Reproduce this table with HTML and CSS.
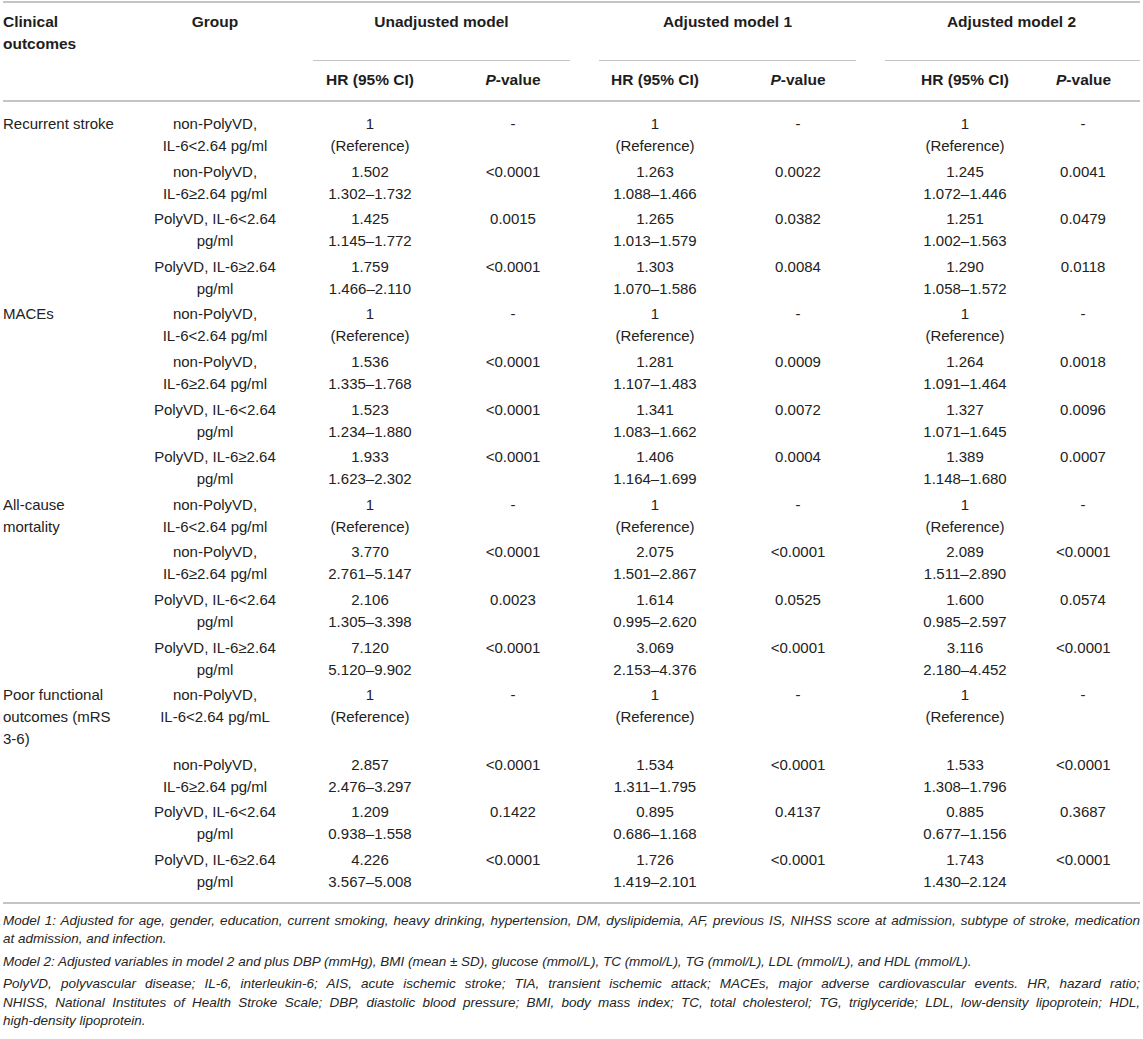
FILE: index.html
```html
<!DOCTYPE html>
<html lang="en">
<head>
<meta charset="utf-8">
<title>Table</title>
<link rel="stylesheet" href="styles.css">
</head>
<body>
<div class="wrap">
<table class="tbl">
  <colgroup>
    <col class="c1"><col class="c2"><col class="c3"><col class="c4"><col class="c5"><col class="c6"><col class="c7"><col class="c8">
  </colgroup>
  <thead>
    <tr class="h1">
      <th class="left">Clinical<br>outcomes</th>
      <th>Group</th>
      <th colspan="2" class="grp">Unadjusted model</th>
      <th colspan="2" class="grp">Adjusted model 1</th>
      <th colspan="2" class="lastgrp">Adjusted model 2</th>
    </tr>
    <tr class="h2">
      <th></th>
      <th></th>
      <th class="ul-start">HR (95% CI)</th>
      <th class="ul-end"><i>P</i>-value</th>
      <th class="ul-start">HR (95% CI)</th>
      <th class="ul-end"><i>P</i>-value</th>
      <th class="ul-start">HR (95% CI)</th>
      <th class="ul-last last"><i>P</i>-value</th>
    </tr>
  </thead>
  <tbody>
    <tr class="first">
      <td class="left">Recurrent stroke</td>
      <td>non-PolyVD,<br>IL-6&lt;2.64 pg/ml</td>
      <td>1<br>(Reference)</td><td>-</td>
      <td>1<br>(Reference)</td><td>-</td>
      <td>1<br>(Reference)</td><td class="last">-</td>
    </tr>
    <tr>
      <td class="left"></td>
      <td>non-PolyVD,<br>IL-6≥2.64 pg/ml</td>
      <td>1.502<br>1.302–1.732</td><td>&lt;0.0001</td>
      <td>1.263<br>1.088–1.466</td><td>0.0022</td>
      <td>1.245<br>1.072–1.446</td><td class="last">0.0041</td>
    </tr>
    <tr>
      <td class="left"></td>
      <td>PolyVD, IL-6&lt;2.64<br>pg/ml</td>
      <td>1.425<br>1.145–1.772</td><td>0.0015</td>
      <td>1.265<br>1.013–1.579</td><td>0.0382</td>
      <td>1.251<br>1.002–1.563</td><td class="last">0.0479</td>
    </tr>
    <tr>
      <td class="left"></td>
      <td>PolyVD, IL-6≥2.64<br>pg/ml</td>
      <td>1.759<br>1.466–2.110</td><td>&lt;0.0001</td>
      <td>1.303<br>1.070–1.586</td><td>0.0084</td>
      <td>1.290<br>1.058–1.572</td><td class="last">0.0118</td>
    </tr>
    <tr>
      <td class="left">MACEs</td>
      <td>non-PolyVD,<br>IL-6&lt;2.64 pg/ml</td>
      <td>1<br>(Reference)</td><td>-</td>
      <td>1<br>(Reference)</td><td>-</td>
      <td>1<br>(Reference)</td><td class="last">-</td>
    </tr>
    <tr>
      <td class="left"></td>
      <td>non-PolyVD,<br>IL-6≥2.64 pg/ml</td>
      <td>1.536<br>1.335–1.768</td><td>&lt;0.0001</td>
      <td>1.281<br>1.107–1.483</td><td>0.0009</td>
      <td>1.264<br>1.091–1.464</td><td class="last">0.0018</td>
    </tr>
    <tr>
      <td class="left"></td>
      <td>PolyVD, IL-6&lt;2.64<br>pg/ml</td>
      <td>1.523<br>1.234–1.880</td><td>&lt;0.0001</td>
      <td>1.341<br>1.083–1.662</td><td>0.0072</td>
      <td>1.327<br>1.071–1.645</td><td class="last">0.0096</td>
    </tr>
    <tr>
      <td class="left"></td>
      <td>PolyVD, IL-6≥2.64<br>pg/ml</td>
      <td>1.933<br>1.623–2.302</td><td>&lt;0.0001</td>
      <td>1.406<br>1.164–1.699</td><td>0.0004</td>
      <td>1.389<br>1.148–1.680</td><td class="last">0.0007</td>
    </tr>
    <tr>
      <td class="left">All-cause<br>mortality</td>
      <td>non-PolyVD,<br>IL-6&lt;2.64 pg/ml</td>
      <td>1<br>(Reference)</td><td>-</td>
      <td>1<br>(Reference)</td><td>-</td>
      <td>1<br>(Reference)</td><td class="last">-</td>
    </tr>
    <tr>
      <td class="left"></td>
      <td>non-PolyVD,<br>IL-6≥2.64 pg/ml</td>
      <td>3.770<br>2.761–5.147</td><td>&lt;0.0001</td>
      <td>2.075<br>1.501–2.867</td><td>&lt;0.0001</td>
      <td>2.089<br>1.511–2.890</td><td class="last">&lt;0.0001</td>
    </tr>
    <tr>
      <td class="left"></td>
      <td>PolyVD, IL-6&lt;2.64<br>pg/ml</td>
      <td>2.106<br>1.305–3.398</td><td>0.0023</td>
      <td>1.614<br>0.995–2.620</td><td>0.0525</td>
      <td>1.600<br>0.985–2.597</td><td class="last">0.0574</td>
    </tr>
    <tr>
      <td class="left"></td>
      <td>PolyVD, IL-6≥2.64<br>pg/ml</td>
      <td>7.120<br>5.120–9.902</td><td>&lt;0.0001</td>
      <td>3.069<br>2.153–4.376</td><td>&lt;0.0001</td>
      <td>3.116<br>2.180–4.452</td><td class="last">&lt;0.0001</td>
    </tr>
    <tr>
      <td class="left">Poor functional<br>outcomes (mRS<br>3-6)</td>
      <td>non-PolyVD,<br>IL-6&lt;2.64 pg/mL</td>
      <td>1<br>(Reference)</td><td>-</td>
      <td>1<br>(Reference)</td><td>-</td>
      <td>1<br>(Reference)</td><td class="last">-</td>
    </tr>
    <tr>
      <td class="left"></td>
      <td>non-PolyVD,<br>IL-6≥2.64 pg/ml</td>
      <td>2.857<br>2.476–3.297</td><td>&lt;0.0001</td>
      <td>1.534<br>1.311–1.795</td><td>&lt;0.0001</td>
      <td>1.533<br>1.308–1.796</td><td class="last">&lt;0.0001</td>
    </tr>
    <tr>
      <td class="left"></td>
      <td>PolyVD, IL-6&lt;2.64<br>pg/ml</td>
      <td>1.209<br>0.938–1.558</td><td>0.1422</td>
      <td>0.895<br>0.686–1.168</td><td>0.4137</td>
      <td>0.885<br>0.677–1.156</td><td class="last">0.3687</td>
    </tr>
    <tr class="final">
      <td class="left"></td>
      <td>PolyVD, IL-6≥2.64<br>pg/ml</td>
      <td>4.226<br>3.567–5.008</td><td>&lt;0.0001</td>
      <td>1.726<br>1.419–2.101</td><td>&lt;0.0001</td>
      <td>1.743<br>1.430–2.124</td><td class="last">&lt;0.0001</td>
    </tr>
  </tbody>
</table>
<div class="notes">
  <p><span class="ln">Model 1: Adjusted for age, gender, education, current smoking, heavy drinking, hypertension, DM, dyslipidemia, AF, previous IS, NIHSS score at admission, subtype of stroke, medication</span> <span class="ln-end">at admission, and infection.</span></p>
  <p><span class="ln-end">Model 2: Adjusted variables in model 2 and plus DBP (mmHg), BMI (mean ± SD), glucose (mmol/L), TC (mmol/L), TG (mmol/L), LDL (mmol/L), and HDL (mmol/L).</span></p>
  <p><span class="ln">PolyVD, polyvascular disease; IL-6, interleukin-6; AIS, acute ischemic stroke; TIA, transient ischemic attack; MACEs, major adverse cardiovascular events. HR, hazard ratio;</span> <span class="ln">NHISS, National Institutes of Health Stroke Scale; DBP, diastolic blood pressure; BMI, body mass index; TC, total cholesterol; TG, triglyceride; LDL, low-density lipoprotein; HDL,</span> <span class="ln-end">high-density lipoprotein.</span></p>
</div>
</div>
</body>
</html>
```

FILE: styles.css
```css
html, body {
  margin: 0;
  padding: 0;
  background: #ffffff;
}

body {
  font-family: "Liberation Sans", Arial, sans-serif;
  color: #222222;
}

.wrap {
  padding: 1px 3px 0 3px;
}

.tbl {
  width: 1137px;
  table-layout: fixed;
  border-collapse: collapse;
  font-size: 15px;
  line-height: 22px;
}

.c1 { width: 125px; }
.c2 { width: 174px; }
.c3 { width: 136px; }
.c4 { width: 150px; }
.c5 { width: 134px; }
.c6 { width: 152px; }
.c7 { width: 182px; }
.c8 { width: 84px; }

.tbl thead tr.h1 {
  border-top: 2px solid #c4c4c4;
}

.tbl th {
  font-size: 15.5px;
  font-weight: bold;
  text-align: center;
  vertical-align: top;
  padding: 0;
  white-space: nowrap;
  color: #1e1e1e;
}

.tbl th i {
  font-style: italic;
}

.tbl tr.h1 th {
  padding-top: 8px;
  padding-bottom: 5px;
}

.tbl tr.h2 th {
  padding-top: 9px;
  padding-bottom: 9px;
}

.tbl tr.h2 {
  border-bottom: 2px solid #c4c4c4;
}

.tbl tr.h1 th.grp {
  padding-left: 11px;
  padding-right: 18px;
}

.tbl tr.h1 th.lastgrp {
  padding-left: 9px;
}

.tbl th.ul-start {
  background-image: linear-gradient(#c4c4c4, #c4c4c4);
  background-repeat: no-repeat;
  background-size: calc(100% - 11px) 1px;
  background-position: right top;
}

.tbl th.ul-end {
  background-image: linear-gradient(#c4c4c4, #c4c4c4);
  background-repeat: no-repeat;
  background-size: calc(100% - 18px) 1px;
  background-position: left top;
}

.tbl th.ul-last {
  background-image: linear-gradient(#c4c4c4, #c4c4c4);
  background-repeat: no-repeat;
  background-size: 100% 1px;
  background-position: left top;
}

.tbl .left {
  text-align: left;
}

.tbl .last {
  padding-right: 30px;
}

.tbl td {
  text-align: center;
  vertical-align: top;
  padding: 2px 0 1.6px 0;
  white-space: nowrap;
}

.tbl tr.first td {
  padding-top: 11px;
}

.tbl tr.final td {
  padding-bottom: 9px;
}

.tbl tbody tr.final {
  border-bottom: 2px solid #c4c4c4;
}

.notes {
  width: 1137px;
  margin-top: 8px;
  font-size: 13.5px;
  line-height: 18.5px;
  font-style: italic;
  color: #262626;
}

.notes p {
  margin: 0 0 4px 0;
}

.notes .ln {
  display: block;
  white-space: nowrap;
  text-align: justify;
  text-align-last: justify;
}

.notes .ln-end {
  display: block;
  white-space: nowrap;
  text-align: left;
}
```
